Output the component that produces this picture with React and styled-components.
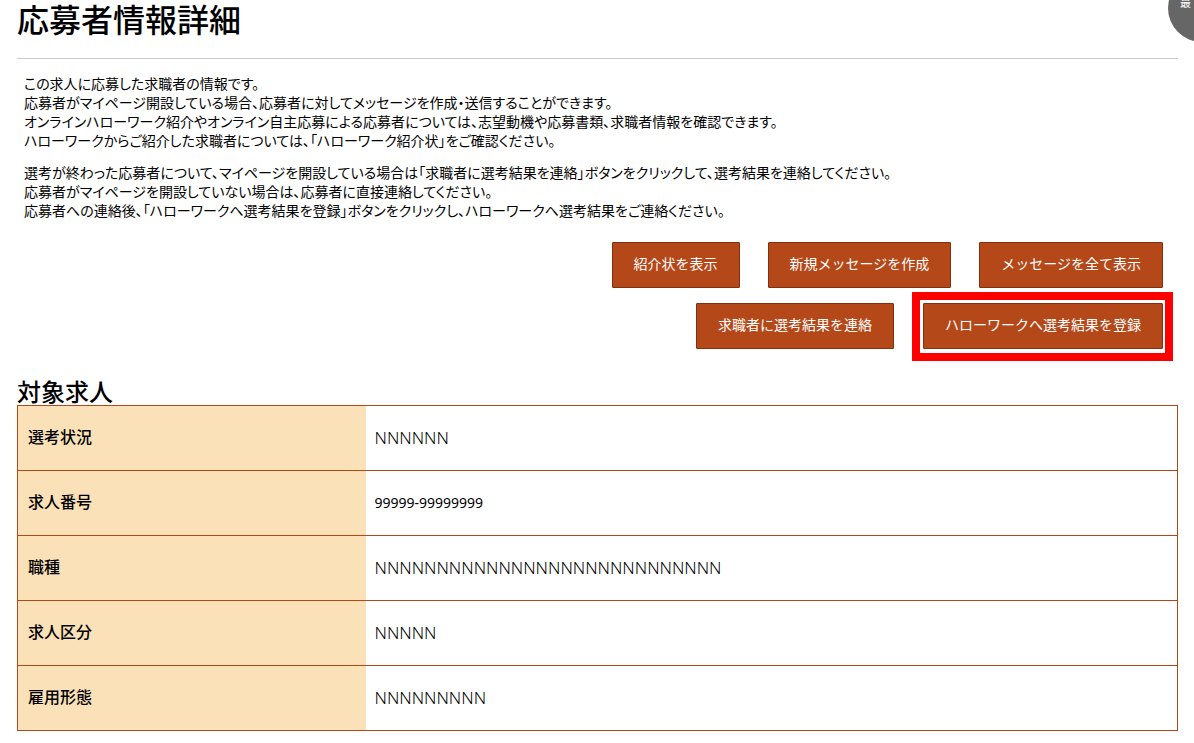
import React from "react";
import styled, { createGlobalStyle } from "styled-components";

const GlobalStyle = createGlobalStyle`
  * {
    box-sizing: border-box;
  }

  body {
    margin: 0;
    background: #fff;
    color: #000;
    font-family: "Noto Sans CJK JP", sans-serif;
  }
`;

const Page = styled.main`
  padding: 0 16px 12px 17px;
`;

const Title = styled.h1`
  margin: 0;
  padding-bottom: 22px;
  border-bottom: 1px solid #ccc;
  font-size: 32px;
  line-height: 36px;
  font-weight: 500;
`;

const Intro = styled.div`
  padding: 15px 7px 0;
  font-size: 14px;
  line-height: 19px;
  font-weight: 400;
  font-feature-settings: "palt";
`;

const Paragraph = styled.p`
  margin: 0 0 13px;
`;

const Actions = styled.div`
  display: flex;
  flex-direction: column;
  gap: 4px;
  margin-top: 22px;
`;

const ActionRow = styled.div`
  display: flex;
  justify-content: flex-end;
  align-items: baseline;
  gap: ${(props) => props.$gap}px;
  padding-right: ${(props) => props.$inset}px;
`;

const ActionButton = styled.button`
  height: 46px;
  padding: 0 21px 4px;
  border: 1px solid #81310f;
  border-radius: 1px;
  background: #b44819;
  color: #fff;
  font-family: inherit;
  font-size: 14px;
  line-height: 20px;
  white-space: nowrap;
  cursor: pointer;
`;

const Highlight = styled.div`
  display: flex;
  padding: 3px 2px 4px 3px;
  border: 8px solid #f00;
`;

const SectionTitle = styled.h2`
  margin: 16px 0 0;
  font-size: 24px;
  line-height: 28px;
  font-weight: 500;
`;

const DetailTable = styled.table`
  width: 100%;
  table-layout: fixed;
  border-collapse: collapse;
  border: 1px solid #b44819;
`;

const DetailRow = styled.tr`
  height: 65px;
  border-bottom: 1px solid #b44819;
`;

const Label = styled.th`
  width: 30%;
  padding: 0 10px 4px;
  background: #fae1b8;
  text-align: left;
  font-size: 16px;
  font-weight: 500;
`;

const Value = styled.td`
  padding: 0 9px 2px;
  font-family: "Noto Sans", sans-serif;
  font-size: ${(props) => (props.$numeric ? 14 : 17)}px;
  font-weight: ${(props) => (props.$numeric ? 400 : 300)};
`;

const TopButton = styled.button`
  position: fixed;
  top: -26px;
  right: -42px;
  width: 68px;
  height: 68px;
  padding: 0 0 12px 12px;
  border: 0;
  border-radius: 50%;
  background: #666;
  color: #fff;
  font-family: inherit;
  font-size: 11px;
  line-height: 20px;
  text-align: left;
`;

const details = [
  { label: "選考状況", value: "NNNNNN" },
  { label: "求人番号", value: "99999-99999999", numeric: true },
  { label: "職種", value: "NNNNNNNNNNNNNNNNNNNNNNNNNNNN" },
  { label: "求人区分", value: "NNNNN" },
  { label: "雇用形態", value: "NNNNNNNNN" },
];

export default function App() {
  return (
    <>
      <GlobalStyle />
      <Page>
        <Title>応募者情報詳細</Title>

        <Intro>
          <Paragraph>
            この求人に応募した求職者の情報です。<br />
            応募者がマイページ開設している場合、応募者に対してメッセージを作成・送信することができます。<br />
            オンラインハローワーク紹介やオンライン自主応募による応募者については、志望動機や応募書類、求職者情報を確認できます。<br />
            ハローワークからご紹介した求職者については、「ハローワーク紹介状」をご確認ください。
          </Paragraph>
          <Paragraph>
            選考が終わった応募者について、マイページを開設している場合は「求職者に選考結果を連絡」ボタンをクリックして、選考結果を連絡してください。<br />
            応募者がマイページを開設していない場合は、応募者に直接連絡してください。<br />
            応募者への連絡後、「ハローワークへ選考結果を登録」ボタンをクリックし、ハローワークへ選考結果をご連絡ください。
          </Paragraph>
        </Intro>

        <Actions>
          <ActionRow $gap={28} $inset={15}>
            <ActionButton type="button">紹介状を表示</ActionButton>
            <ActionButton type="button">新規メッセージを作成</ActionButton>
            <ActionButton type="button">メッセージを全て表示</ActionButton>
          </ActionRow>
          <ActionRow $gap={18} $inset={5}>
            <ActionButton type="button">求職者に選考結果を連絡</ActionButton>
            <Highlight>
              <ActionButton type="button">ハローワークへ選考結果を登録</ActionButton>
            </Highlight>
          </ActionRow>
        </Actions>

        <SectionTitle>対象求人</SectionTitle>
        <DetailTable>
          <tbody>
            {details.map((item) => (
              <DetailRow key={item.label}>
                <Label scope="row">{item.label}</Label>
                <Value $numeric={item.numeric}>{item.value}</Value>
              </DetailRow>
            ))}
          </tbody>
        </DetailTable>
      </Page>
      <TopButton type="button">最</TopButton>
    </>
  );
}
